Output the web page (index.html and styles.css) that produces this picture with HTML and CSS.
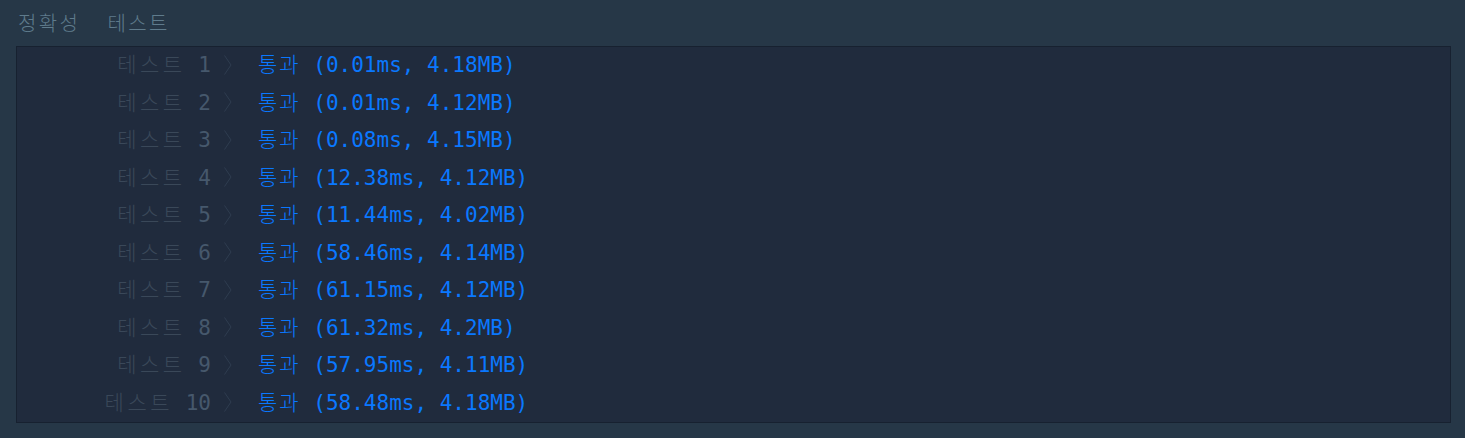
FILE: index.html
```html
<!DOCTYPE html>
<html lang="ko">
<head>
<meta charset="utf-8">
<link rel="stylesheet" href="styles.css">
</head>
<body>
<div class="console">
  <div class="title"><span>정확성</span><span>테스트</span></div>
  <div class="results">
    <div class="row"><span class="label"><span class="ko">테스트</span> 1</span><svg class="chev" width="8" height="20" viewBox="0 0 8 20"><polyline points="0.5,0.5 7,10 0.5,19.5"/></svg><span class="result"><span class="ko">통과</span> (0.01ms, 4.18MB)</span></div>
    <div class="row"><span class="label"><span class="ko">테스트</span> 2</span><svg class="chev" width="8" height="20" viewBox="0 0 8 20"><polyline points="0.5,0.5 7,10 0.5,19.5"/></svg><span class="result"><span class="ko">통과</span> (0.01ms, 4.12MB)</span></div>
    <div class="row"><span class="label"><span class="ko">테스트</span> 3</span><svg class="chev" width="8" height="20" viewBox="0 0 8 20"><polyline points="0.5,0.5 7,10 0.5,19.5"/></svg><span class="result"><span class="ko">통과</span> (0.08ms, 4.15MB)</span></div>
    <div class="row"><span class="label"><span class="ko">테스트</span> 4</span><svg class="chev" width="8" height="20" viewBox="0 0 8 20"><polyline points="0.5,0.5 7,10 0.5,19.5"/></svg><span class="result"><span class="ko">통과</span> (12.38ms, 4.12MB)</span></div>
    <div class="row"><span class="label"><span class="ko">테스트</span> 5</span><svg class="chev" width="8" height="20" viewBox="0 0 8 20"><polyline points="0.5,0.5 7,10 0.5,19.5"/></svg><span class="result"><span class="ko">통과</span> (11.44ms, 4.02MB)</span></div>
    <div class="row"><span class="label"><span class="ko">테스트</span> 6</span><svg class="chev" width="8" height="20" viewBox="0 0 8 20"><polyline points="0.5,0.5 7,10 0.5,19.5"/></svg><span class="result"><span class="ko">통과</span> (58.46ms, 4.14MB)</span></div>
    <div class="row"><span class="label"><span class="ko">테스트</span> 7</span><svg class="chev" width="8" height="20" viewBox="0 0 8 20"><polyline points="0.5,0.5 7,10 0.5,19.5"/></svg><span class="result"><span class="ko">통과</span> (61.15ms, 4.12MB)</span></div>
    <div class="row"><span class="label"><span class="ko">테스트</span> 8</span><svg class="chev" width="8" height="20" viewBox="0 0 8 20"><polyline points="0.5,0.5 7,10 0.5,19.5"/></svg><span class="result"><span class="ko">통과</span> (61.32ms, 4.2MB)</span></div>
    <div class="row"><span class="label"><span class="ko">테스트</span> 9</span><svg class="chev" width="8" height="20" viewBox="0 0 8 20"><polyline points="0.5,0.5 7,10 0.5,19.5"/></svg><span class="result"><span class="ko">통과</span> (57.95ms, 4.11MB)</span></div>
    <div class="row"><span class="label"><span class="ko">테스트</span> 10</span><svg class="chev" width="8" height="20" viewBox="0 0 8 20"><polyline points="0.5,0.5 7,10 0.5,19.5"/></svg><span class="result"><span class="ko">통과</span> (58.48ms, 4.18MB)</span></div>
  </div>
</div>
</body>
</html>
```

FILE: styles.css
```css
html, body {
  margin: 0;
  padding: 0;
  background: #263747;
}
.console {
  padding: 0 14px 15px 16px;
  font-family: "DejaVu Sans Mono", "Noto Sans CJK KR", monospace;
}
.title {
  height: 46px;
  display: flex;
  align-items: center;
  gap: 27px;
  padding-left: 2px;
  padding-bottom: 1px;
  box-sizing: border-box;
  font-family: "Noto Sans CJK KR", sans-serif;
  font-weight: 300;
  font-size: 20px;
  letter-spacing: 2.4px;
  color: #5f7b8c;
}
.results {
  background: #202b3d;
  border: 1px solid #172130;
  box-sizing: border-box;
  height: 377px;
}
.row {
  height: 37.5px;
  box-sizing: border-box;
  padding-bottom: 2px;
  display: flex;
  align-items: center;
  font-size: 21px;
  white-space: pre;
}
.row > span {
  line-height: 1;
}
.ko {
  font-family: "Noto Sans CJK KR", sans-serif;
  font-weight: 300;
  letter-spacing: 3.5px;
}
.label {
  width: 194px;
  text-align: right;
  color: #46586c;
}
.label .ko {
  color: #3a4859;
}
.chev {
  margin-left: 13px;
  fill: none;
  stroke: #2f3d50;
  stroke-width: 1;
}
.result {
  margin-left: 26px;
  color: #0a78ff;
}
.result .ko {
  letter-spacing: 2px;
}
```
